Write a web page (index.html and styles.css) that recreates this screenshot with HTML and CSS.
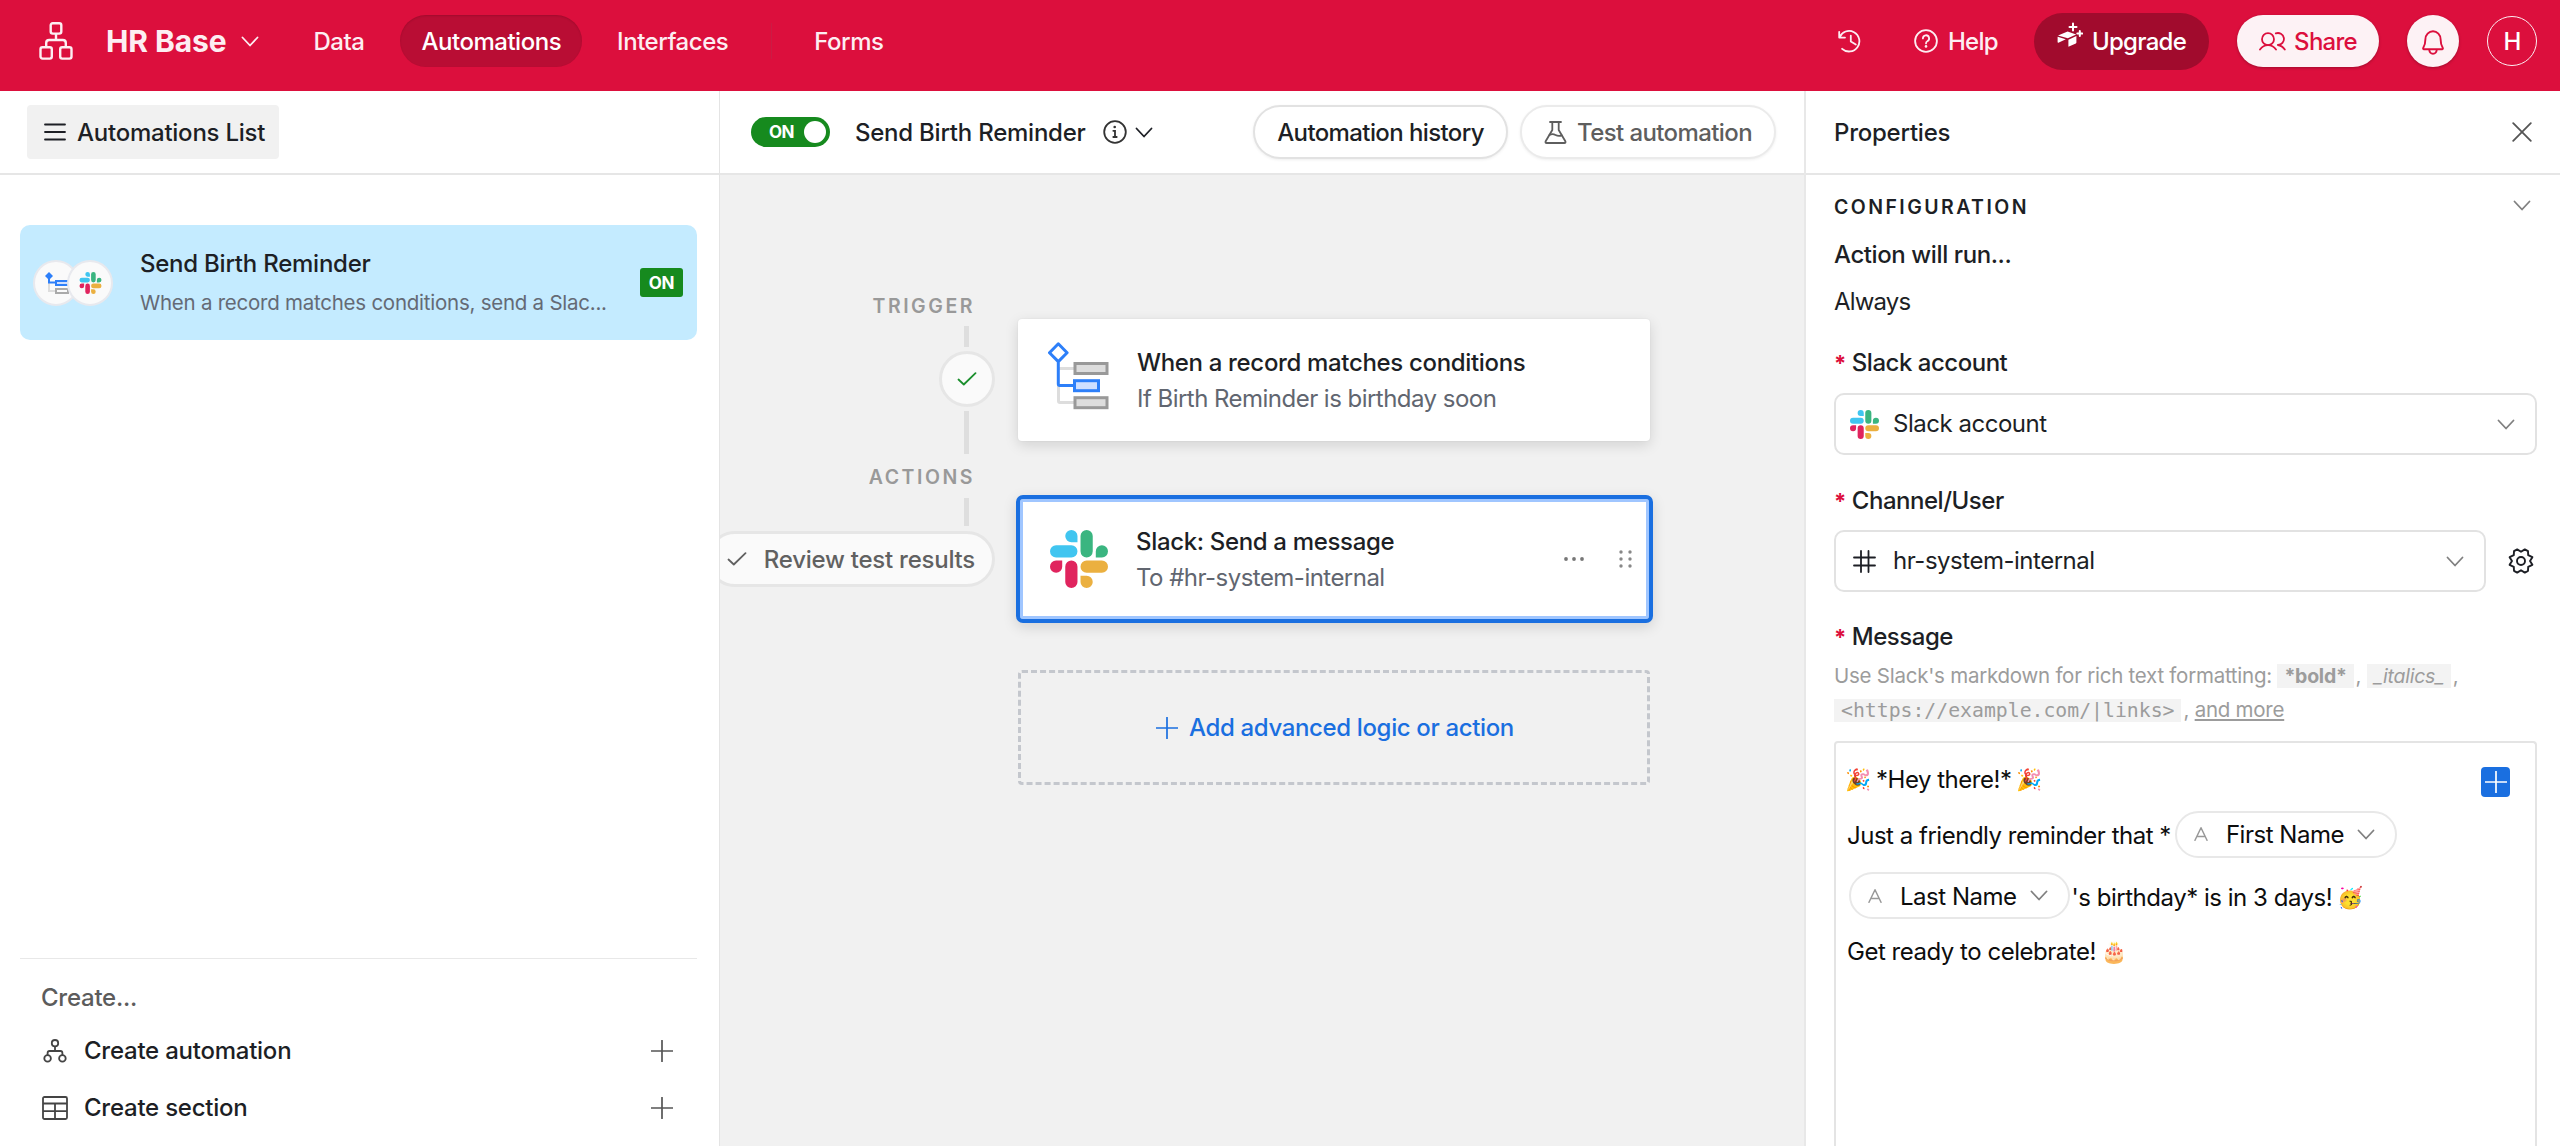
FILE: index.html
```html
<!doctype html>
<html lang="en">
  <head>
    <meta charset="UTF-8" />
    <meta
      name="viewport"
      content="width=device-width, initial-scale=1.0"
    />
    <title>HR Base - Automations</title>
    <link rel="stylesheet" href="styles.css">
  </head>
  <body>
    <!-- shared icons -->
    <svg class="sprite" width="0" height="0">
      <symbol id="chevron" viewBox="0 0 18 11">
        <path d="M1.5 1.5 9 9.5 16.5 1.5" fill="none" stroke="currentColor" stroke-width="1.8" stroke-linecap="round" stroke-linejoin="round" />
      </symbol>
      <symbol id="plus" viewBox="0 0 22 22">
        <path d="M11 .5v21M.5 11h21" fill="none" stroke="currentColor" stroke-width="1.7" stroke-linecap="round" />
      </symbol>
      <symbol id="check" viewBox="0 0 20 14">
        <path d="M1.5 7.5 6.8 12.5 18.5 1.2" fill="none" stroke="currentColor" stroke-width="1.8" stroke-linecap="round" stroke-linejoin="round" />
      </symbol>
      <symbol id="text-field" viewBox="0 0 14 14">
        <path d="M1 13.3 7 .8l6 12.5M3 9.4h8" fill="none" stroke="currentColor" stroke-width="1.5" stroke-linecap="round" stroke-linejoin="round" />
      </symbol>
      <symbol id="slack" viewBox="0 0 57 57">
        <path fill="#40c5f0" d="M27 12h-6a6 6 0 1 1 6-6zM6 15h15a6 6 0 0 1 0 12H6a6 6 0 0 1 0-12z" />
        <path fill="#3ab580" d="M36 0a6 6 0 0 1 6 6v15a6 6 0 0 1-12 0V6a6 6 0 0 1 6-6zM45 27v-6a6 6 0 1 1 6 6z" />
        <path fill="#e0245e" d="M12 30v6a6 6 0 1 1-6-6zM21 30a6 6 0 0 1 6 6v15a6 6 0 0 1-12 0V36a6 6 0 0 1 6-6z" />
        <path fill="#ebb040" d="M36 30h15a6 6 0 0 1 0 12H36a6 6 0 0 1 0-12zM30 45h6a6 6 0 1 1-6 6z" />
      </symbol>
    </svg>

    <header class="topbar">
      <svg class="logo" viewBox="0 0 34 38">
        <g fill="none" stroke="currentColor" stroke-width="2.4">
          <rect x="11.7" y="1.2" width="10.6" height="10.4" rx="2" />
          <rect x="1.5" y="25.2" width="11.3" height="11.4" rx="2" />
          <rect x="21.2" y="25.2" width="11.3" height="11.4" rx="2" />
          <path d="M17 11.6v6.2M7.2 25v-4q0-3 3-3h13.6q3 0 3 3v4" />
        </g>
      </svg>
      <h1 class="base-name">HR Base</h1>
      <svg class="chevron base-chevron"><use href="#chevron" /></svg>
      <nav class="tabs">
        <a class="tab">Data</a>
        <a class="tab active">Automations</a>
        <a class="tab">Interfaces</a>
        <i class="tab-divider"></i>
        <a class="tab">Forms</a>
      </nav>
      <div class="top-actions">
        <svg class="history" viewBox="0 0 24 24">
          <g fill="none" stroke="currentColor" stroke-width="1.8" stroke-linecap="round" stroke-linejoin="round">
            <path d="M1.2 2.8v5.8H7M1.5 8.4a10.3 10.3 0 1 1 2.6 11.4" />
            <path d="M12.8 6.6v6l5 3" />
          </g>
        </svg>
        <a class="help">
          <svg viewBox="0 0 24 24">
            <circle cx="12" cy="12" r="10.9" fill="none" stroke="currentColor" stroke-width="1.8" />
            <path d="M8.9 9.4a3.1 3.1 0 1 1 4.4 2.8c-.9.4-1.3 1-1.3 2.2" fill="none" stroke="currentColor" stroke-width="1.8" stroke-linecap="round" />
            <circle cx="12" cy="17.4" r="1.3" fill="currentColor" />
          </svg>
          <span>Help</span>
        </a>
        <button class="upgrade">
          <svg viewBox="0 0 26 26">
            <path fill="currentColor" d="M1 13.4 10.6 9.6l8.6 2.8-8.4 3.9zM.6 14.8l8.2 2.4-7.4 3.6q-.8.2-.8-.7zM11.4 17.8l8-3.7v6.4q0 .7-.6 1l-7.4 3.3z" />
            <path fill="none" stroke="currentColor" stroke-width="2" stroke-linecap="round" d="M16 1.4v7M12.5 4.9h7M22.8 9v5M20.3 11.5h5" />
          </svg>
          <span>Upgrade</span>
        </button>
        <button class="share">
          <svg viewBox="0 0 27 19">
            <g fill="none" stroke="currentColor" stroke-width="1.8" stroke-linecap="round" stroke-linejoin="round">
              <circle cx="9" cy="7.2" r="6" />
              <path d="M1 17.6q3-4.4 8-4.4t8 4.4M16.8 1.4a6 6 0 1 1 2 11.6q4.2.4 7 4.6" />
            </g>
          </svg>
          <span>Share</span>
        </button>
        <button class="bell">
          <svg viewBox="0 0 22 25">
            <g fill="none" stroke="currentColor" stroke-width="1.9" stroke-linejoin="round">
              <path d="M3.4 9.2a7.6 8 0 0 1 15.2 0c0 4.8 1 6.8 2.2 8.8q.4 1-.6 1.2H1.8q-1-.2-.6-1.2c1.2-2 2.2-4 2.2-8.8z" />
              <path d="M7.2 19.5q.4 4.2 3.8 4.2t3.8-4.2" />
            </g>
          </svg>
        </button>
        <span class="avatar">H</span>
      </div>
    </header>

    <main class="workspace">
      <aside class="sidebar">
        <div class="bar sidebar-bar">
          <button class="list-toggle">
            <svg viewBox="0 0 22 18"><path d="M1 1.5h20M1 9h20M1 16.5h20" stroke="currentColor" stroke-width="1.8" stroke-linecap="round" /></svg>
            <span>Automations List</span>
          </button>
        </div>
        <div class="automation">
          <div class="app-icons">
            <span class="app-icon">
              <svg class="mini-flow" viewBox="0 0 22 22">
                <g fill="none" stroke-width="2">
                  <path stroke="#ddd" d="M4 11v8h7" />
                  <rect x="11" y="17" width="12" height="4" stroke="#aaa" />
                  <path stroke="#2d7ff9" d="M4 4v6.500h7" />
                  <rect x="11" y="9" width="12" height="4" stroke="#2d7ff9" fill="#cfdfff" />
                </g>
                <path fill="#2d7ff9" d="M4 0l4 4-4 4-4-4z" />
              </svg>
            </span>
            <span class="app-icon"><svg class="mini-slack"><use href="#slack" /></svg></span>
          </div>
          <div class="automation-text">
            <div class="automation-title">Send Birth Reminder</div>
            <div class="automation-sub">When a record matches conditions, send a Slac...</div>
          </div>
          <span class="badge">ON</span>
        </div>
        <div class="create">
          <div class="create-title">Create...</div>
          <div class="create-row">
            <svg class="create-icon" viewBox="0 0 26 24">
              <g fill="none" stroke="currentColor" stroke-width="1.8">
                <circle cx="13" cy="4.2" r="3.2" />
                <circle cx="5.6" cy="19.4" r="3.3" />
                <circle cx="20.4" cy="19.4" r="3.3" />
                <path d="M13 7.5v4.5M5.6 16v-2q0-2 2-2h10.8q2 0 2 2v2" />
              </g>
            </svg>
            <span>Create automation</span>
            <svg class="plus"><use href="#plus" /></svg>
          </div>
          <div class="create-row">
            <svg class="create-icon" viewBox="0 0 26 24">
              <g fill="none" stroke="currentColor" stroke-width="1.8">
                <rect x="1" y="1" width="24" height="22" rx="1.5" />
                <path d="M1 7.5h24M1 15.2h24M13 7.5v15.5" />
              </g>
            </svg>
            <span>Create section</span>
            <svg class="plus"><use href="#plus" /></svg>
          </div>
        </div>
      </aside>

      <section class="editor">
        <div class="bar editor-bar">
          <span class="toggle">ON<i class="knob"></i></span>
          <h2 class="editor-title">Send Birth Reminder</h2>
          <svg class="info" viewBox="0 0 24 24">
            <circle cx="12" cy="12" r="10.8" fill="none" stroke="currentColor" stroke-width="1.8" />
            <path d="M10.3 10.8H12v6.2M10.3 17h3.4" fill="none" stroke="currentColor" stroke-width="1.8" stroke-linecap="round" />
            <circle cx="11.7" cy="7" r="1.3" fill="currentColor" />
          </svg>
          <svg class="chevron title-chevron"><use href="#chevron" /></svg>
          <button class="pill-button history-button">Automation history</button>
          <button class="pill-button test-button">
            <svg viewBox="0 0 23 23">
              <g fill="none" stroke="currentColor" stroke-width="1.8" stroke-linejoin="round" stroke-linecap="round">
                <path d="M6 1h11M8.3 1v8L1.8 20q-1 2 1 2h17.4q2 0 1-2L14.7 9V1" />
                <path d="M5.5 14q3-1.6 6 0t6.3.4" />
              </g>
            </svg>
            <span>Test automation</span>
          </button>
        </div>

        <div class="canvas">
          <div class="rail">
            <div class="rail-label">TRIGGER</div>
            <i class="line line-top"></i>
            <span class="status"><svg class="check"><use href="#check" /></svg></span>
            <i class="line line-long"></i>
            <div class="rail-label actions-label">ACTIONS</div>
            <i class="line line-actions"></i>
            <span class="status review">
              <svg class="check"><use href="#check" /></svg>
              <span>Review test results</span>
            </span>
          </div>

          <div class="steps">
            <div class="step">
              <svg class="step-icon" viewBox="0 0 64 68">
                <g fill="none" stroke-width="3">
                  <path stroke="#ddd" d="M10 26.5h16M10.5 43v16q0 1.5 1.5 1.5h14" />
                  <path stroke="#2d7ff9" stroke-linejoin="round" d="M10.3 1.8l8.8 8.9-8.8 8.9-8.8-8.9zM10.3 19.5v22.5q0 1.5 1.5 1.5h14" />
                  <rect x="27" y="21.5" width="32" height="10" stroke="#999" fill="#ddd" />
                  <rect x="26.5" y="38.7" width="24" height="10" stroke="#2d7ff9" fill="#cfdfff" />
                  <rect x="27" y="55.7" width="32" height="10" stroke="#999" fill="#ddd" />
                </g>
              </svg>
              <div class="step-text">
                <div class="step-title">When a record matches conditions</div>
                <div class="step-sub">If Birth Reminder is birthday soon</div>
              </div>
            </div>
            <div class="step selected">
              <svg class="step-slack"><use href="#slack" /></svg>
              <div class="step-text">
                <div class="step-title">Slack: Send a message</div>
                <div class="step-sub">To #hr-system-internal</div>
              </div>
              <svg class="more" viewBox="0 0 20 4" fill="currentColor">
                <circle cx="2" cy="2" r="1.9" /><circle cx="10" cy="2" r="1.9" /><circle cx="18" cy="2" r="1.9" />
              </svg>
              <svg class="grip" viewBox="0 0 13 18" fill="currentColor">
                <circle cx="2" cy="2" r="1.7" /><circle cx="11" cy="2" r="1.7" />
                <circle cx="2" cy="9" r="1.7" /><circle cx="11" cy="9" r="1.7" />
                <circle cx="2" cy="16" r="1.7" /><circle cx="11" cy="16" r="1.7" />
              </svg>
            </div>
            <button class="add-step">
              <svg class="plus"><use href="#plus" /></svg>
              <span>Add advanced logic or action</span>
            </button>
          </div>
        </div>
      </section>

      <aside class="properties">
        <div class="bar properties-bar">
          <h2 class="panel-title">Properties</h2>
          <svg class="close" viewBox="0 0 20 20"><path d="M1.2 1.2l17.6 17.6M18.8 1.2L1.2 18.8" stroke="currentColor" stroke-width="1.8" stroke-linecap="round" /></svg>
        </div>
        <div class="panel">
          <div class="section-head">
            <span>CONFIGURATION</span>
            <svg class="chevron"><use href="#chevron" /></svg>
          </div>
          <div class="run-label">Action will run...</div>
          <div class="run-value">Always</div>

          <label class="field-label"><b>*</b><span>Slack account</span></label>
          <div class="select">
            <svg class="select-slack"><use href="#slack" /></svg>
            <span>Slack account</span>
            <svg class="chevron"><use href="#chevron" /></svg>
          </div>

          <label class="field-label channel-label"><b>*</b><span>Channel/User</span></label>
          <div class="select-row">
            <div class="select">
              <svg class="hash" viewBox="0 0 23 23"><path d="M8 1v21M15.5 1v21M1 7.5h21M1 15.5h21" stroke="currentColor" stroke-width="1.8" stroke-linecap="round" /></svg>
              <span>hr-system-internal</span>
              <svg class="chevron"><use href="#chevron" /></svg>
            </div>
            <svg class="gear" viewBox="0 0 26 26">
              <g fill="none" stroke="currentColor" stroke-width="1.9" stroke-linejoin="round">
                <path d="M9.2 1.4 13 3.8 16.8 1.4 20 3.2 20.2 7.2 24.4 9.2 22 13 24.4 16.8 20.2 18.8 20 22.8 16.8 24.6 13 22.2 9.2 24.6 6 22.8 5.8 18.8 1.6 16.8 4 13 1.6 9.2 5.8 7.2 6 3.2z" />
                <circle cx="13" cy="13" r="4" />
              </g>
            </svg>
          </div>

          <label class="field-label message-label"><b>*</b><span>Message</span></label>
          <p class="hint">
            Use Slack's markdown for rich text formatting: <code class="tag"><strong>*bold*</strong></code>, <code class="tag"><em>_italics_</em></code>,<br />
            <code class="tag mono">&lt;https://example.com/|links&gt;</code>, <a>and more</a>
          </p>

          <div class="message">
            <div class="message-line">
              <span class="emoji">🎉</span><span>*Hey there!*</span><span class="emoji">🎉</span>
              <button class="insert"><svg class="plus"><use href="#plus" /></svg></button>
            </div>
            <div class="message-line">
              <span>Just a friendly reminder that *</span>
              <span class="token">
                <svg class="field-icon"><use href="#text-field" /></svg>
                <span class="token-name">First Name</span>
                <svg class="chevron"><use href="#chevron" /></svg>
              </span>
            </div>
            <div class="message-line tall">
              <span class="token">
                <svg class="field-icon"><use href="#text-field" /></svg>
                <span class="token-name">Last Name</span>
                <svg class="chevron"><use href="#chevron" /></svg>
              </span>
              <span>'s birthday* is in 3 days!</span><span class="emoji">🥳</span>
            </div>
            <div class="message-line last">
              <span>Get ready to celebrate!</span><span class="emoji">🎂</span>
            </div>
          </div>
        </div>
      </aside>
    </main>
  </body>
</html>
```
FILE: styles.css
```css
* {
  box-sizing: border-box;
}
html,
body {
  height: 100%;
  margin: 0;
}
body {
  display: flex;
  flex-direction: column;
  overflow: hidden;
  font-family: Inter, 'Liberation Sans', sans-serif;
  font-size: 24px;
  letter-spacing: -0.02em;
  color: #1d1f25;
  background: #fff;
}
h1,
h2,
p {
  margin: 0;
}
button {
  font: inherit;
  letter-spacing: inherit;
  color: inherit;
  border: none;
  padding: 0;
  white-space: nowrap;
}
svg {
  flex: none;
  display: block;
}
.sprite {
  position: absolute;
}
.chevron {
  width: 18px;
  height: 11px;
}
.plus {
  width: 22px;
  height: 22px;
}

/* top bar */
.topbar {
  flex: none;
  display: flex;
  align-items: center;
  height: 91px;
  padding: 0 23px 9px 39px;
  background: #dc0f3d;
  color: #fdeef2;
}
.logo {
  width: 34px;
  height: 38px;
}
.base-name {
  margin-left: 33px;
  font-size: 30px;
  font-weight: 700;
  line-height: 40px;
  letter-spacing: -0.003em;
}
.base-chevron {
  margin-left: 14px;
}
.tabs {
  display: flex;
  align-items: center;
  margin-left: 32px;
  font-weight: 500;
}
.tab {
  display: flex;
  align-items: center;
  height: 52px;
  padding: 0 23px;
}
.tab:first-child {
  margin-right: 13px;
}
.tab.active {
  margin-right: 12px;
  padding: 0 21px;
  border-radius: 26px;
  background: #b90d34;
  box-shadow: inset 0 1px 2px #0002;
  color: #fff;
}
.tab-divider {
  width: 1px;
  height: 36px;
  margin: 0 19px 0 20px;
  background: #cb1c44;
}
.top-actions {
  display: flex;
  align-items: center;
  margin-left: auto;
  font-weight: 500;
  letter-spacing: -0.03em;
}
.history {
  width: 24px;
  height: 24px;
}
.help {
  display: flex;
  align-items: center;
  gap: 10px;
  margin: 0 36px 0 52px;
}
.help svg {
  width: 24px;
  height: 24px;
}
.upgrade {
  display: flex;
  align-items: center;
  gap: 9px;
  height: 57px;
  padding: 0 23px;
  border-radius: 29px;
  background: #a10b2d;
  color: #fff;
}
.upgrade svg {
  width: 26px;
  height: 26px;
  margin-bottom: 12px;
}
.share {
  display: flex;
  align-items: center;
  gap: 8px;
  height: 52px;
  margin-left: 28px;
  padding: 0 22px;
  border-radius: 26px;
  background: #fdf2f5;
  box-shadow: 0 1px 3px #0004;
  color: #dc0f3d;
}
.share svg {
  width: 27px;
  height: 19px;
}
.bell {
  display: flex;
  align-items: center;
  justify-content: center;
  width: 52px;
  height: 52px;
  margin-left: 28px;
  border-radius: 50%;
  background: #fdf2f5;
  box-shadow: 0 1px 3px #0004;
  color: #dc0f3d;
}
.bell svg {
  width: 22px;
  height: 25px;
  margin-top: 3px;
}
.avatar {
  display: flex;
  align-items: center;
  justify-content: center;
  width: 50px;
  height: 50px;
  margin-left: 28px;
  border: 1.5px solid #fdeef2;
  border-radius: 50%;
  color: #fff;
}

/* columns */
.workspace {
  flex: 1;
  display: grid;
  grid-template-columns: 720px 1084px 756px;
  min-height: 0;
}
.bar {
  flex: none;
  display: flex;
  align-items: center;
  height: 84px;
  border-bottom: 2px solid #e6e6e6;
}
.sidebar,
.editor,
.properties {
  display: flex;
  flex-direction: column;
  min-width: 0;
  min-height: 0;
}

/* sidebar */
.sidebar {
  border-right: 1px solid #e4e4e4;
  letter-spacing: -0.01em;
}
.sidebar-bar {
  padding-left: 27px;
}
.list-toggle {
  display: flex;
  align-items: center;
  gap: 11px;
  height: 54px;
  padding: 0 14px 0 17px;
  border-radius: 4px;
  background: #f1f1f1;
  font-weight: 500;
}
.list-toggle svg {
  width: 22px;
  height: 18px;
}
.automation {
  display: flex;
  align-items: center;
  height: 115px;
  margin: 50px 22px 0 20px;
  padding: 0 14px 0 13px;
  border-radius: 10px;
  background: #c4ebff;
}
.app-icons {
  display: flex;
}
.app-icon {
  display: flex;
  align-items: center;
  justify-content: center;
  width: 46px;
  height: 46px;
  border: 2px solid #e8e9ee;
  border-radius: 50%;
  background: #fafafa;
  overflow: hidden;
}
.app-icon + .app-icon {
  margin-left: -12px;
}
.mini-flow {
  width: 22px;
  height: 22px;
  overflow: visible;
}
.mini-slack {
  width: 23px;
  height: 22px;
}
.automation-text {
  flex: 1;
  margin-left: 27px;
  line-height: 39px;
  white-space: nowrap;
}
.automation-title {
  font-weight: 500;
}
.automation-sub {
  font-size: 20.5px;
  letter-spacing: -0.012em;
  color: #646a75;
}
.badge {
  display: flex;
  align-items: center;
  justify-content: center;
  width: 43px;
  height: 29px;
  border-radius: 3px;
  background: #168a1e;
  color: #fff;
  font-size: 17px;
  font-weight: 700;
}
.create {
  margin: auto 22px 10px 20px;
  padding: 17px 24px 0 22px;
  border-top: 1px solid #e8e8e8;
}
.create-title {
  margin: 0 0 2px -1px;
  line-height: 44px;
  font-weight: 500;
  color: #5c5c5c;
}
.create-row {
  display: flex;
  align-items: center;
  gap: 16px;
  height: 57px;
  font-weight: 500;
}
.create-row .plus {
  margin-left: auto;
  color: #555;
}
.create-icon {
  width: 26px;
  height: 24px;
  color: #444;
}

/* editor */
.editor-bar {
  padding: 0 28px 0 31px;
}
.toggle {
  display: flex;
  align-items: center;
  justify-content: space-between;
  width: 79px;
  height: 30px;
  padding: 0 4px 0 18px;
  border-radius: 15px;
  background: #168a1e;
  color: #fff;
  font-size: 17px;
  font-weight: 700;
}
.knob {
  width: 22px;
  height: 22px;
  border-radius: 50%;
  background: #fff;
}
.editor-title {
  margin-left: 25px;
  font-size: 24px;
  font-weight: 500;
  letter-spacing: -0.01em;
}
.info {
  width: 24px;
  height: 24px;
  margin-left: 17px;
  color: #333;
}
.title-chevron {
  margin-left: 8px;
}
.pill-button {
  display: flex;
  align-items: center;
  height: 54px;
  padding: 0 22px;
  border: 2px solid #e2e2e2;
  border-radius: 27px;
  background: #fff;
  box-shadow: 0 1px 3px #0001;
  font-weight: 500;
  letter-spacing: -0.025em;
}
.history-button {
  margin-left: auto;
}
.test-button {
  gap: 10px;
  margin-left: 12px;
  border-color: #ebebeb;
  color: #5e5e5e;
}
.test-button svg {
  width: 23px;
  height: 23px;
}
.canvas {
  flex: 1;
  display: flex;
  gap: 23px;
  background: #f1f1f1;
  overflow: hidden;
}
.rail {
  display: flex;
  flex-direction: column;
  align-items: flex-end;
  width: 275px;
  padding-top: 121px;
}
.rail-label {
  margin-right: 20px;
  font-size: 19.5px;
  font-weight: 600;
  line-height: 20px;
  letter-spacing: 0.13em;
  color: #999;
}
.actions-label {
  margin-top: 13px;
}
.line {
  width: 5px;
  margin-right: 26px;
  background: #dedede;
}
.line-top {
  height: 21px;
  margin-top: 10px;
}
.line-long {
  height: 43px;
  margin-top: 4px;
}
.line-actions {
  height: 28px;
  margin-top: 11px;
}
.status {
  flex: none;
  display: flex;
  align-items: center;
  justify-content: center;
  width: 56px;
  height: 56px;
  margin-top: 4px;
  border: 3px solid #e6e6e6;
  border-radius: 28px;
  background: #fafafa;
  color: #1b8f2d;
}
.check {
  width: 20px;
  height: 14px;
}
.status.review {
  gap: 17px;
  width: auto;
  margin-top: 5px;
  padding: 0 17px;
  color: #616161;
  font-weight: 500;
  letter-spacing: -0.01em;
  white-space: nowrap;
}
.steps {
  display: flex;
  flex-direction: column;
  width: 632px;
  padding-top: 144px;
}
.step {
  display: flex;
  align-items: center;
  height: 122px;
  padding-left: 30px;
  border-radius: 4px;
  background: #fff;
  box-shadow: 0 4px 14px #0002, 0 0 2px #0001;
}
.step-icon {
  width: 64px;
  height: 68px;
  margin-top: -9px;
}
.step-text {
  margin: 1px 0 0 25px;
  line-height: 36px;
}
.step-title {
  font-weight: 500;
  letter-spacing: -0.014em;
}
.step-sub {
  letter-spacing: -0.022em;
  color: #616670;
}
.step.selected {
  height: 128px;
  margin: 54px -3px 0 -2px;
  padding-left: 30px;
  border: 4px solid #1a6fe0;
  border-radius: 7px;
  box-shadow: inset 0 0 0 3px #a0c6ff, 0 4px 14px #0002;
}
.step-slack {
  width: 58px;
  height: 58px;
}
.selected .step-text {
  margin-left: 28px;
}
.more {
  width: 20px;
  height: 4px;
  margin-left: auto;
  color: #777;
}
.grip {
  width: 13px;
  height: 18px;
  margin: 0 17px 0 35px;
  color: #888;
}
.add-step {
  display: flex;
  align-items: center;
  justify-content: center;
  gap: 11px;
  height: 115px;
  margin-top: 47px;
  padding-left: 2px;
  border: 3px dashed #c4c7cd;
  border-radius: 4px;
  background: none;
  color: #1a6fe0;
  font-weight: 500;
  letter-spacing: -0.015em;
}

/* properties */
.properties {
  border-left: 2px solid #e8e8e8;
}
.properties-bar {
  padding: 0 28px;
}
.panel-title {
  font-size: 24px;
  font-weight: 500;
  letter-spacing: -0.01em;
}
.close {
  width: 20px;
  height: 20px;
  margin-left: auto;
  color: #555;
}
.panel {
  flex: 1;
  display: flex;
  flex-direction: column;
  min-height: 0;
  padding: 15px 23px 0 28px;
  line-height: 34px;
}
.panel .chevron {
  color: #808080;
}
.section-head {
  display: flex;
  justify-content: space-between;
  align-items: center;
  padding-right: 6px;
  font-size: 19.5px;
  font-weight: 600;
  letter-spacing: 0.125em;
}
.section-head .chevron {
  margin-top: -3px;
}
.run-label {
  margin-top: 14px;
  font-weight: 500;
  letter-spacing: -0.017em;
}
.run-value {
  margin-top: 13px;
  letter-spacing: -0.035em;
}
.field-label {
  display: flex;
  gap: 6px;
  margin: 27px 0 13px;
  font-weight: 500;
}
.field-label b {
  font-size: 22px;
  color: #dc0f3d;
}
.channel-label {
  margin: 29px 0 12px;
}
.message-label {
  margin: 28px 0 5px;
}
.select {
  flex: 1 0 auto;
  display: flex;
  align-items: center;
  height: 62px;
  padding: 0 20px 0 14px;
  border: 2px solid #e2e2e2;
  border-radius: 10px;
}
.panel > .select {
  flex: none;
}
.select .chevron {
  margin-left: auto;
}
.select-slack {
  width: 29px;
  height: 29px;
  margin-right: 14px;
}
.select-row {
  display: flex;
  align-items: center;
}
.hash {
  width: 23px;
  height: 23px;
  margin: 0 17px 0 3px;
}
.gear {
  width: 26px;
  height: 26px;
  margin: 0 3px 0 22px;
}
.hint {
  height: 66px;
  font-size: 20.5px;
  line-height: 33px;
  letter-spacing: -0.012em;
  color: #9c9c9c;
}
.tag {
  margin-right: 2px;
  padding: 0 7px;
  background: #f3f3f3;
  font-family: inherit;
  font-size: 19.5px;
}
.tag.mono {
  font: 19.8px/30px 'DejaVu Sans Mono', monospace;
  letter-spacing: 0;
}
.hint a {
  text-decoration: underline;
}
.message {
  flex: 1;
  margin-top: 16px;
  padding: 9px 25px 0 11px;
  border: 2px solid #e4e4e4;
  border-bottom: none;
  border-radius: 4px 4px 0 0;
  color: #0d0d0d;
}
.message-line {
  display: flex;
  align-items: center;
  height: 56px;
  white-space: nowrap;
}
.message-line.tall {
  height: 67px;
}
.message-line.last {
  height: 41px;
}
.emoji {
  width: 26px;
  margin: 0 5px;
  font-size: 21px;
}
.emoji:first-child {
  margin-left: -2px;
}
.insert {
  display: flex;
  align-items: center;
  justify-content: center;
  width: 29px;
  height: 30px;
  margin: 4px 0 0 auto;
  border-radius: 4px;
  background: #1a6fe0;
  color: #fff;
}
.token {
  display: flex;
  align-items: center;
  height: 47px;
  margin: -4px 2px 0 2px;
  padding: 0 20px 0 17px;
  border: 2px solid #e8e8e8;
  border-radius: 24px;
}
span + .token {
  margin-left: 4px;
}
.token-name {
  padding-top: 2px;
}
.field-icon {
  width: 14px;
  height: 14px;
  margin-right: 18px;
  color: #999;
}
.token .chevron {
  margin-left: 13px;
}
```
